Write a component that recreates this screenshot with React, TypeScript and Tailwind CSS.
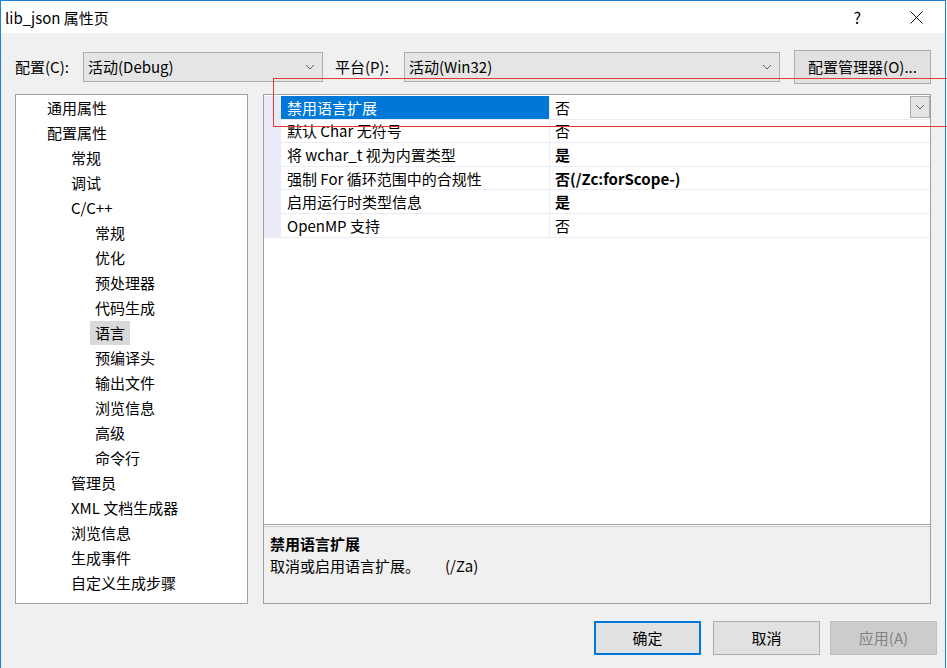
const tree = [
  { label: "通用属性", level: 0 },
  { label: "配置属性", level: 0 },
  { label: "常规", level: 1 },
  { label: "调试", level: 1 },
  { label: "C/C++", level: 1 },
  { label: "常规", level: 2 },
  { label: "优化", level: 2 },
  { label: "预处理器", level: 2 },
  { label: "代码生成", level: 2 },
  { label: "语言", level: 2, selected: true },
  { label: "预编译头", level: 2 },
  { label: "输出文件", level: 2 },
  { label: "浏览信息", level: 2 },
  { label: "高级", level: 2 },
  { label: "命令行", level: 2 },
  { label: "管理员", level: 1 },
  { label: "XML 文档生成器", level: 1 },
  { label: "浏览信息", level: 1 },
  { label: "生成事件", level: 1 },
  { label: "自定义生成步骤", level: 1 },
];

const props = [
  { name: "禁用语言扩展", value: "否", bold: false },
  { name: "默认 Char 无符号", value: "否", bold: false },
  { name: "将 wchar_t 视为内置类型", value: "是", bold: true },
  { name: "强制 For 循环范围中的合规性", value: "否(/Zc:forScope-)", bold: true },
  { name: "启用运行时类型信息", value: "是", bold: true },
  { name: "OpenMP 支持", value: "否", bold: false },
];

const indent = ["pl-[31px]", "pl-[55px]", "pl-[74px]"];

function Chevron() {
  return (
    <svg width="10" height="6" viewBox="0 0 10 6" fill="none">
      <path d="M1 1l4 4 4-4" stroke="#606060" strokeWidth="1" />
    </svg>
  );
}

function Select({ text, w }: { text: string; w: string }) {
  return (
    <div className={`${w} h-[30px] flex items-center justify-between bg-[#e5e5e5] border border-[#adadad] pl-[4px] pr-[7px]`}>
      <span>{text}</span>
      <Chevron />
    </div>
  );
}

export default function App() {
  return (
    <div className="w-[947px] h-[668px] bg-white overflow-hidden relative text-[15px] text-black font-['Noto_Sans_CJK_SC','Noto_Sans',sans-serif]">
      <div className="w-[946px] h-[668px] border-x border-t border-[#1883d7] bg-[#f0f0f0] flex flex-col">
        {/* title bar */}
        <div className="h-[32px] bg-white flex items-center pl-[4px] shrink-0">
          <span className="leading-none">lib_json 属性页</span>
          <span className="ml-auto mr-[49px] text-[16px] leading-none">?</span>
          <svg width="13" height="13" viewBox="0 0 13 13" className="mr-[22px]">
            <path d="M0.5 0.5l12 12M12.5 0.5l-12 12" stroke="#111" strokeWidth="1" />
          </svg>
        </div>

        {/* config row */}
        <div className="h-[61px] pt-[6px] flex items-center shrink-0 leading-none">
          <span className="ml-[14px] w-[68px]">配置(C):</span>
          <Select text="活动(Debug)" w="w-[240px]" />
          <span className="ml-[12px] w-[69px]">平台(P):</span>
          <Select text="活动(Win32)" w="w-[376px]" />
          <button className="ml-[14px] w-[137px] h-[34px] bg-[#e1e1e1] border border-[#adadad] text-[15px]">
            配置管理器(O)...
          </button>
        </div>

        {/* main */}
        <div className="flex h-[510px] shrink-0 pl-[14px] gap-[15px]">
          <div className="w-[233px] h-full bg-white border border-[#a0a0a0]">
            {tree.map((t, i) => (
              <div key={i} className={`h-[25px] flex items-center leading-none ${indent[t.level]}`}>
                {t.selected ? (
                  <span className="bg-[#d9d9d9] h-[24px] px-[5px] flex items-center">{t.label}</span>
                ) : (
                  <span className={t.level === 2 ? "pl-[5px]" : ""}>{t.label}</span>
                )}
              </div>
            ))}
          </div>

          <div className="w-[668px] h-full border border-[#a0a0a0] flex flex-col">
            <div className="h-[430px] bg-white pt-[1px] border-b border-[#a0a0a0]">
              {props.map((p, i) => (
                <div key={i} className="h-[23.6px] flex leading-none">
                  <div className="w-[17px] bg-[#e9ecf8]" />
                  <div
                    className={`w-[268px] flex items-center pl-[6px] border-b border-[#e8ecf6] ${
                      i === 0 ? "bg-[#0078d7] text-white" : ""
                    }`}
                  >
                    {p.name}
                  </div>
                  <div className="flex-1 flex items-center pl-[5px] border-l border-b border-[#e8ecf6]">
                    <span className={p.bold ? "font-bold" : ""}>{p.value}</span>
                    {i === 0 && (
                      <div className="ml-auto w-[20px] h-[22px] bg-[#e5e5e5] border border-[#adadad] flex items-center justify-center">
                        <Chevron />
                      </div>
                    )}
                  </div>
                </div>
              ))}
            </div>
            <div className="h-[2px] bg-white border-b border-[#c8c8c8]" />
            <div className="flex-1 px-[6px] pt-[9px] leading-none">
              <div className="font-bold h-[22px]">禁用语言扩展</div>
              <div className="flex">
                <span className="w-[175px]">取消或启用语言扩展。</span>
                <span>(/Za)</span>
              </div>
            </div>
          </div>
        </div>

        {/* buttons */}
        <div className="flex justify-end pr-[8px] pt-[17px] gap-[12px]">
          <button className="w-[107px] h-[34px] bg-[#e1e1e1] border-2 border-[#0078d7] text-[15px]">确定</button>
          <button className="w-[107px] h-[34px] bg-[#e1e1e1] border border-[#adadad] text-[15px]">取消</button>
          <button className="w-[107px] h-[34px] bg-[#cccccc] border border-[#bfbfbf] text-[#838383] text-[15px] -ml-[2px]">
            应用(A)
          </button>
        </div>
      </div>

      {/* red annotation */}
      <div className="absolute left-[273px] top-[78px] w-[700px] h-[49px] border border-[#e33b32] pointer-events-none" />
    </div>
  );
}
